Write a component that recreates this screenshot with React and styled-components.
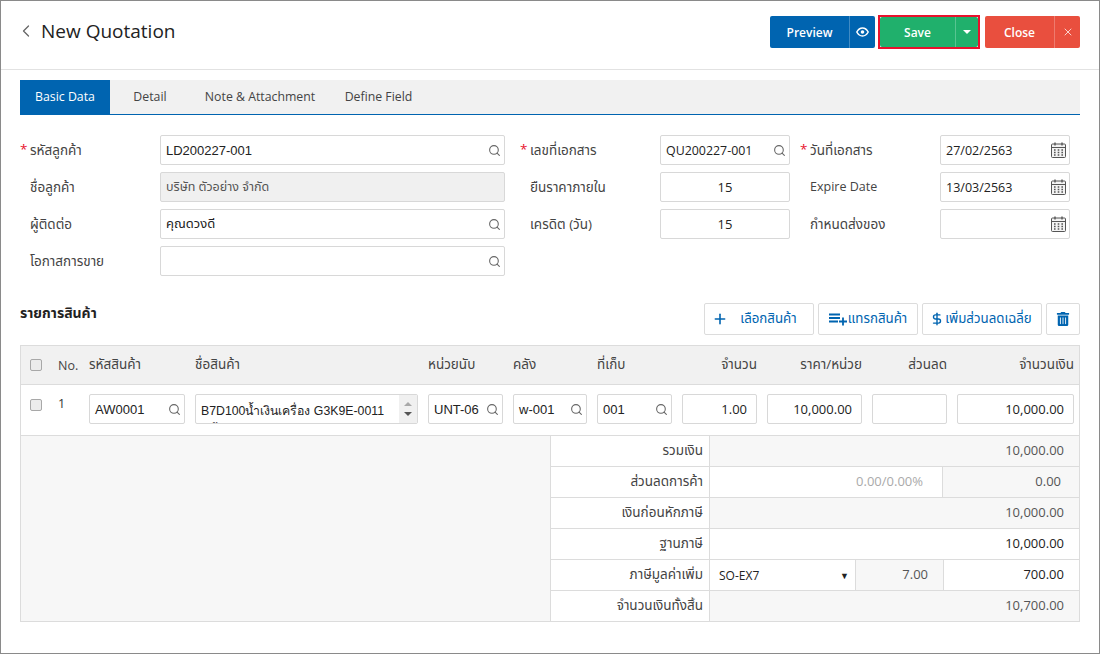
import React from "react";
import styled, { createGlobalStyle } from "styled-components";
import { ChevronLeft, X, Plus, Search, DollarSign } from "lucide-react";
import { FaTrashAlt } from "react-icons/fa";

const Global = createGlobalStyle`
  * { box-sizing: border-box; }
  body {
    margin: 0;
    background: #fff;
    font-family: "Open Sans", "Noto Sans", "Noto Sans Thai", Tahoma, sans-serif;
    font-size: 13px;
    color: #333;
  }
`;

const Frame = styled.div`
  width: 1100px;
  height: 654px;
  border: 1px solid #8a8a8a;
  overflow: hidden;
`;
const Header = styled.header`
  height: 69px;
  padding: 14px 19px 0 15px;
  border-bottom: 1px solid #e2e2e2;
  display: flex;
  justify-content: space-between;
`;
const TitleBox = styled.div`
  display: flex;
  align-items: center;
  gap: 5px;
  height: 32px;
  color: #666;
`;
const Title = styled.h1`
  margin: 0;
  font-size: 19px;
  font-weight: 400;
  color: #222;
`;
const Actions = styled.div`
  display: flex;
  align-items: flex-start;
`;
const BtnGroup = styled.div`
  display: flex;
  height: ${(p) => p.$h || 32}px;
  margin-top: ${(p) => p.$top ?? 1}px;
  margin-left: ${(p) => p.$left || 0}px;
  border-radius: 2px;
  overflow: hidden;
  color: #fff;
  font-weight: 600;
  font-size: 12px;
  background: ${(p) => p.$bg};
`;
const SaveOutline = styled.div`
  margin-left: 3px;
  border: 2px solid #e8112d;
  height: 34px;
`;
const BtnMain = styled.button`
  width: ${(p) => p.$w}px;
  border: 0;
  background: none;
  color: inherit;
  font: inherit;
  padding: 0;
`;
const BtnSide = styled.button`
  width: ${(p) => p.$w}px;
  border: 0;
  border-left: 1px solid rgba(255, 255, 255, 0.25);
  background: none;
  color: inherit;
  padding: 0;
  display: flex;
  align-items: center;
  justify-content: center;
`;
const Caret = styled.span`
  width: 0;
  height: 0;
  border-left: 4px solid transparent;
  border-right: 4px solid transparent;
  border-top: 4px solid #fff;
`;
const Body = styled.main`
  padding: 10px 19px 0;
`;
const Tabs = styled.nav`
  display: flex;
  height: 35px;
  background: #f1f1f1;
  border-bottom: 1px solid #0064b0;
`;
const Tab = styled.div`
  width: ${(p) => p.$w}px;
  height: 35px;
  line-height: 33px;
  text-align: center;
  font-size: 12.3px;
  color: ${(p) => (p.$active ? "#fff" : "#444")};
  background: ${(p) => (p.$active ? "#0064b0" : "transparent")};
`;
const Form = styled.section`
  display: flex;
  margin-top: 20px;
`;
const FormCol = styled.div`
  width: ${(p) => p.$w}px;
  margin-right: ${(p) => p.$gap || 0}px;
  display: flex;
  flex-direction: column;
  gap: 7px;
`;
const FieldRow = styled.div`
  display: flex;
  align-items: center;
  height: 30px;
`;
const Label = styled.label`
  position: relative;
  width: 140px;
  flex: none;
  padding-left: 10px;
  font-size: ${(p) => p.$size || 13.5}px;
  line-height: 18px;
  color: #444;
`;
const Star = styled.span`
  position: absolute;
  left: 0;
  top: -1px;
  color: #e8112d;
`;
const InputBox = styled.div`
  flex: 1;
  min-width: 0;
  height: 30px;
  display: flex;
  align-items: center;
  justify-content: ${(p) => (p.$center ? "center" : p.$right ? "flex-end" : "flex-start")};
  padding: 0 ${(p) => (p.$right ? 9 : 5)}px 0 5px;
  border: 1px solid #d8d8d8;
  border-radius: 2px;
  background: ${(p) => (p.$disabled ? "#f0f0f0" : "#fff")};
  color: ${(p) => (p.$disabled ? "#555" : "#222")};
  font-family: ${(p) => (p.$arial ? '"Liberation Sans", sans-serif' : "inherit")};
  font-size: ${(p) => p.$size || 13}px;
  white-space: nowrap;
`;
const SearchIcon = styled(Search)`
  flex: none;
  margin-left: auto;
  margin-right: -2px;
  width: 13px;
  height: 13px;
  color: #666;
`;
const CalendarSvg = styled.svg`
  flex: none;
  margin-left: auto;
  margin-right: -2px;
  width: 15px;
  height: 16px;
  color: #555;
`;
const CalendarIcon = () => (
  <CalendarSvg viewBox="0 0 15 16" fill="none" stroke="currentColor">
    <rect x="0.5" y="2" width="14" height="13.5" rx="1" fill="#f4f4f4" />
    <path d="M0.5 5.5h14" />
    <path d="M4 0.5v3M11 0.5v3" strokeWidth="1.4" />
    <path d="M3 8h1.6M6.7 8h1.6M10.4 8h1.6M3 10.5h1.6M6.7 10.5h1.6M10.4 10.5h1.6M3 13h1.6M6.7 13h1.6M10.4 13h1.6" strokeWidth="1.3" />
  </CalendarSvg>
);
const EyeIcon = () => (
  <svg width="13" height="10" viewBox="0 0 13 10" fill="none" stroke="#fff" strokeWidth="1.5">
    <path d="M0.8 5C2.2 2.4 4.2 1 6.5 1s4.3 1.4 5.7 4C10.8 7.6 8.8 9 6.5 9S2.200 7.600 0.8 5z" />
    <circle cx="6.500" cy="5" r="1.800" fill="#fff" stroke="none" />
  </svg>
);
const SectionHead = styled.div`
  display: flex;
  justify-content: space-between;
  align-items: flex-start;
  margin-top: 27px;
`;
const SectionTitle = styled.h2`
  margin: 1px 0 0;
  font-size: 14px;
  line-height: 18px;
  font-weight: 700;
  color: #222;
`;
const Toolbar = styled.div`
  display: flex;
  gap: 4px;
`;
const ToolBtn = styled.button`
  width: ${(p) => p.$w}px;
  height: 32px;
  padding: 0 ${(p) => p.$pr || 0}px 0 0;
  display: flex;
  align-items: center;
  justify-content: center;
  gap: ${(p) => p.$gap || 0}px;
  border: 1px solid #dcdcdc;
  border-radius: 2px;
  background: #fff;
  color: #0064b0;
  font: inherit;
  font-size: 13.3px;
`;
const TableBox = styled.section`
  margin-top: 10px;
  border: 1px solid #dcdcdc;
`;
const columns = "18px 21px 96px 223px 75px 74px 75px 75px 95px 75px 117px";
const HeadRow = styled.div`
  display: grid;
  grid-template-columns: ${columns};
  column-gap: 10px;
  align-items: center;
  height: 39px;
  padding: 0 5px 0 9px;
  background: #f1f1f1;
  border-bottom: 1px solid #dcdcdc;
  font-size: 13.5px;
  color: #444;
`;
const HeadCell = styled.div`
  text-align: ${(p) => (p.$right ? "right" : "left")};
  font-size: ${(p) => (p.$latin ? "12.5px" : "inherit")};
  white-space: nowrap;
`;
const ItemRow = styled.div`
  display: grid;
  grid-template-columns: ${columns};
  column-gap: 10px;
  align-items: start;
  height: 51px;
  padding: 9px 5px 0 9px;
  border-bottom: 1px solid #dcdcdc;
`;
const Check = styled.span`
  display: block;
  width: 12px;
  height: 12px;
  margin-top: ${(p) => p.$top || 0}px;
  border: 1px solid #a8a8a8;
  border-radius: 2px;
  background: #ececec;
`;
const RowNo = styled.div`
  margin-top: 1px;
  font-size: 12.5px;
`;
const NameBox = styled.div`
  display: flex;
  height: 30px;
  border: 1px solid #d8d8d8;
  border-radius: 2px;
  overflow: hidden;
`;
const NameText = styled.div`
  flex: 1;
  padding: 6px 0 0 5px;
  font-family: "Liberation Sans", sans-serif;
  font-size: 12.3px;
  line-height: 20px;
  color: #222;
  white-space: nowrap;
  overflow: hidden;
`;
const Scroll = styled.div`
  width: 18px;
  flex: none;
  background: #f0f0f0;
  display: flex;
  flex-direction: column;
  align-items: center;
  justify-content: center;
  gap: 6px;
`;
const ArrowUp = styled.span`
  width: 0;
  height: 0;
  border-left: 4px solid transparent;
  border-right: 4px solid transparent;
  border-bottom: 4px solid #a8a8a8;
`;
const ArrowDown = styled.span`
  width: 0;
  height: 0;
  border-left: 4px solid transparent;
  border-right: 4px solid transparent;
  border-top: 4px solid #555;
`;
const Summary = styled.div`
  display: flex;
`;
const SummaryBlank = styled.div`
  width: 530px;
  background: #f7f7f7;
  border-right: 1px solid #dcdcdc;
`;
const SummaryRows = styled.div`
  flex: 1;
`;
const SummaryRow = styled.div`
  display: flex;
  height: 31px;
  border-bottom: 1px solid #dcdcdc;
  &:last-child {
    height: 30px;
    border-bottom: 0;
  }
`;
const SummaryLabel = styled.div`
  width: 159px;
  flex: none;
  padding-right: 6px;
  text-align: right;
  line-height: 29px;
  font-size: 13.5px;
  color: #444;
  border-right: 1px solid #dcdcdc;
`;
const SummaryValue = styled.div`
  flex: ${(p) => (p.$w ? "none" : 1)};
  width: ${(p) => (p.$w ? `${p.$w}px` : "auto")};
  padding-right: ${(p) => p.$pad || 15}px;
  text-align: right;
  line-height: 29px;
  font-size: 13px;
  color: ${(p) => p.$color || "#555"};
  background: ${(p) => (p.$white ? "#fff" : "#f7f7f7")};
  border-left: ${(p) => (p.$divided ? "1px solid #dcdcdc" : "0")};
`;
const TaxSelect = styled.div`
  width: 145px;
  flex: none;
  display: flex;
  justify-content: space-between;
  align-items: center;
  padding: 0 6px 0 9px;
  font-size: 12px;
  color: #222;
`;
const SelectArrow = styled.span`
  font-size: 9px;
`;

const InsertIcon = () => (
  <svg width="19" height="14" viewBox="0 0 19 14" fill="none" stroke="#0064b0" strokeWidth="1.8">
    <path d="M0 2.500h11M0 6h11M0 9.500h9M10 9.500h8M14 5.500v8" />
  </svg>
);

const Field = ({ label, required, size, children }) => (
  <FieldRow>
    <Label $size={size}>
      {required && <Star>*</Star>}
      {label}
    </Label>
    {children}
  </FieldRow>
);

const Lookup = ({ value, ...rest }) => (
  <InputBox {...rest}>
    {value}
    <SearchIcon />
  </InputBox>
);

const DateBox = ({ value }) => (
  <InputBox $size={12.5}>
    {value}
    <CalendarIcon />
  </InputBox>
);

export default function App() {
  return (
    <Frame>
      <Global />
      <Header>
        <TitleBox>
          <ChevronLeft size={20} strokeWidth={1.5} />
          <Title>New Quotation</Title>
        </TitleBox>
        <Actions>
          <BtnGroup $bg="#0064b0">
            <BtnMain $w={79}>Preview</BtnMain>
            <BtnSide $w={26}><EyeIcon /></BtnSide>
          </BtnGroup>
          <SaveOutline>
            <BtnGroup $bg="#20b06c" $top={0} $h={30}>
              <BtnMain $w={75}>Save</BtnMain>
              <BtnSide $w={23}><Caret /></BtnSide>
            </BtnGroup>
          </SaveOutline>
          <BtnGroup $bg="#e94f3e" $left={5}>
            <BtnMain $w={69}>Close</BtnMain>
            <BtnSide $w={26}><X size={12} strokeWidth={1.5} /></BtnSide>
          </BtnGroup>
        </Actions>
      </Header>
      <Body>
        <Tabs>
          <Tab $w={90} $active>Basic Data</Tab>
          <Tab $w={80}>Detail</Tab>
          <Tab $w={140}>Note &amp; Attachment</Tab>
          <Tab $w={97}>Define Field</Tab>
        </Tabs>
        <Form>
          <FormCol $w={485} $gap={15}>
            <Field label="รหัสลูกค้า" required><Lookup $arial value="LD200227-001" /></Field>
            <Field label="ชื่อลูกค้า"><InputBox $disabled $size={12.5}>บริษัท ตัวอย่าง จำกัด</InputBox></Field>
            <Field label="ผู้ติดต่อ"><Lookup value="คุณดวงดี" /></Field>
            <Field label="โอกาสการขาย"><Lookup value="" /></Field>
          </FormCol>
          <FormCol $w={270} $gap={10}>
            <Field label="เลขที่เอกสาร" required><Lookup $size={12.4} value="QU200227-001" /></Field>
            <Field label="ยืนราคาภายใน"><InputBox $center>15</InputBox></Field>
            <Field label="เครดิต (วัน)"><InputBox $center>15</InputBox></Field>
          </FormCol>
          <FormCol $w={270}>
            <Field label="วันที่เอกสาร" required><DateBox value="27/02/2563" /></Field>
            <Field label="Expire Date" size={12.5}><DateBox value="13/03/2563" /></Field>
            <Field label="กำหนดส่งของ"><DateBox value="" /></Field>
          </FormCol>
        </Form>
        <SectionHead>
          <SectionTitle>รายการสินค้า</SectionTitle>
          <Toolbar>
            <ToolBtn $w={110} $gap={12} $pr={9}><Plus size={16} strokeWidth={2.4} />เลือกสินค้า</ToolBtn>
            <ToolBtn $w={100}><InsertIcon />แทรกสินค้า</ToolBtn>
            <ToolBtn $w={120} $gap={1} $pr={2}><DollarSign size={14} strokeWidth={2.4} />เพิ่มส่วนลดเฉลี่ย</ToolBtn>
            <ToolBtn $w={34}><FaTrashAlt size={14} /></ToolBtn>
          </Toolbar>
        </SectionHead>
        <TableBox>
          <HeadRow>
            <Check />
            <HeadCell $latin>No.</HeadCell>
            <HeadCell>รหัสสินค้า</HeadCell>
            <HeadCell>ชื่อสินค้า</HeadCell>
            <HeadCell>หน่วยนับ</HeadCell>
            <HeadCell>คลัง</HeadCell>
            <HeadCell>ที่เก็บ</HeadCell>
            <HeadCell $right>จำนวน</HeadCell>
            <HeadCell $right>ราคา/หน่วย</HeadCell>
            <HeadCell $right>ส่วนลด</HeadCell>
            <HeadCell $right>จำนวนเงิน</HeadCell>
          </HeadRow>
          <ItemRow>
            <Check $top={5} />
            <RowNo>1</RowNo>
            <Lookup $arial value="AW0001" />
            <NameBox>
              <NameText>
                B7D100น้ำเงินเครื่อง G3K9E-0011
                <br />
                สีน้ำเงิน
              </NameText>
              <Scroll><ArrowUp /><ArrowDown /></Scroll>
            </NameBox>
            <Lookup $arial value="UNT-06" />
            <Lookup $arial value="w-001" />
            <Lookup $arial value="001" />
            <InputBox $right>1.00</InputBox>
            <InputBox $right>10,000.00</InputBox>
            <InputBox $right />
            <InputBox $right>10,000.00</InputBox>
          </ItemRow>
          <Summary>
            <SummaryBlank />
            <SummaryRows>
              <SummaryRow>
                <SummaryLabel>รวมเงิน</SummaryLabel>
                <SummaryValue>10,000.00</SummaryValue>
              </SummaryRow>
              <SummaryRow>
                <SummaryLabel>ส่วนลดการค้า</SummaryLabel>
                <SummaryValue $white $color="#aaa" $pad={19}>0.00/0.00%</SummaryValue>
                <SummaryValue $w={137} $pad={18} $divided>0.00</SummaryValue>
              </SummaryRow>
              <SummaryRow>
                <SummaryLabel>เงินก่อนหักภาษี</SummaryLabel>
                <SummaryValue>10,000.00</SummaryValue>
              </SummaryRow>
              <SummaryRow>
                <SummaryLabel>ฐานภาษี</SummaryLabel>
                <SummaryValue $white $color="#222">10,000.00</SummaryValue>
              </SummaryRow>
              <SummaryRow>
                <SummaryLabel>ภาษีมูลค่าเพิ่ม</SummaryLabel>
                <TaxSelect>SO-EX7<SelectArrow>▼</SelectArrow></TaxSelect>
                <SummaryValue $divided>7.00</SummaryValue>
                <SummaryValue $w={136} $white $color="#222" $divided>700.00</SummaryValue>
              </SummaryRow>
              <SummaryRow>
                <SummaryLabel>จำนวนเงินทั้งสิ้น</SummaryLabel>
                <SummaryValue>10,700.00</SummaryValue>
              </SummaryRow>
            </SummaryRows>
          </Summary>
        </TableBox>
      </Body>
    </Frame>
  );
}
